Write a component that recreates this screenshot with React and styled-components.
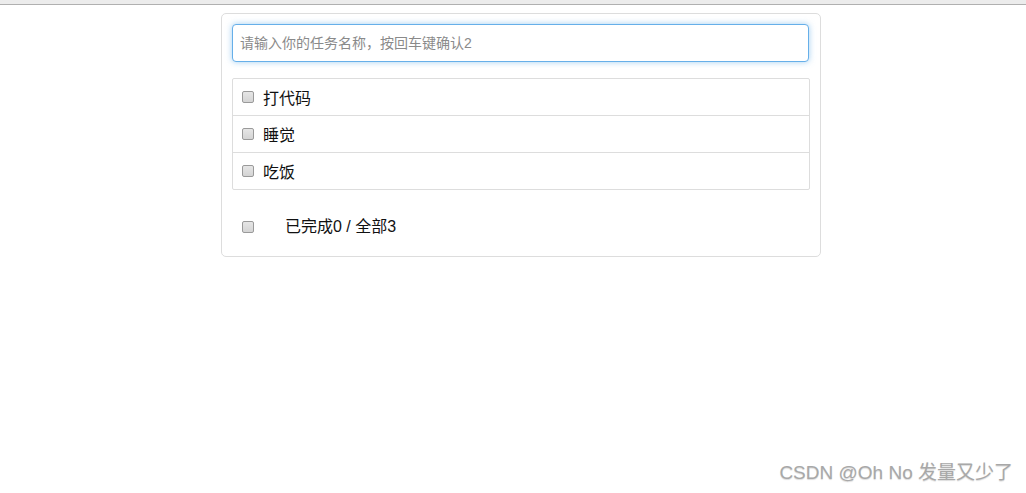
import React, { useState } from "react";
import styled, { createGlobalStyle } from "styled-components";

const GlobalStyle = createGlobalStyle`
  html, body {
    margin: 0;
    padding: 0;
    background: #fff;
    font-family: "Liberation Sans", "Noto Sans CJK SC", sans-serif;
  }
`;

const Page = styled.div`
  position: relative;
  width: 1026px;
  height: 493px;
  overflow: hidden;
`;

const TopBar = styled.div`
  height: 4px;
  background: #ececec;
  border-bottom: 1px solid #b0b0b0;
`;

const Wrap = styled.div`
  box-sizing: border-box;
  width: 600px;
  margin: 8px 0 0 221px;
  padding: 10px;
  border: 1px solid #ddd;
  border-radius: 5px;
`;

const Input = styled.input`
  display: block;
  box-sizing: border-box;
  width: 577px;
  height: 38px;
  padding: 0 7px;
  border: 1px solid #66afe9;
  border-radius: 4px;
  outline: none;
  box-shadow: 0 0 6px rgba(102, 175, 233, 0.6);
  font-family: "Liberation Sans", "Noto Sans CJK SC", sans-serif;
  font-size: 14px;
  color: #333;
  &::placeholder {
    color: #8a8a8a;
  }
`;

const List = styled.ul`
  list-style: none;
  margin: 16px 0 0;
  padding: 0;
  border: 1px solid #ddd;
  border-radius: 2px;
`;

const Item = styled.li`
  display: flex;
  align-items: center;
  height: 36px;
  padding-left: 9px;
  padding-bottom: 1px;
  box-sizing: border-box;
  font-size: 16px;
  color: #111;
  & + & {
    height: 37px;
    border-top: 1px solid #ddd;
  }
`;

const Check = styled.input.attrs({ type: "checkbox" })`
  appearance: none;
  box-sizing: border-box;
  width: 12px;
  height: 12px;
  margin: 0 ${(p) => p.$gap || 9}px 0 0;
  border: 1px solid #9a9a9a;
  border-radius: 2px;
  background: linear-gradient(#e6e6e6, #d4d4d4);
  &:checked {
    background: #4a90d9;
  }
`;

const Footer = styled.div`
  display: flex;
  align-items: center;
  height: 38px;
  margin-top: 18px;
  padding-left: 10px;
  font-size: 16px;
  color: #111;
`;

const FooterText = styled.span`
  position: relative;
  top: -2px;
`;

const Watermark = styled.div`
  position: absolute;
  right: 13px;
  bottom: 9px;
  font-family: "Liberation Sans", "Noto Sans CJK SC", sans-serif;
  font-size: 19px;
  color: #a8a8a8;
  text-shadow: 0 1px 1px rgba(0, 0, 0, 0.15);
`;

export default function App() {
  const [todos, setTodos] = useState([
    { id: 1, name: "打代码", done: false },
    { id: 2, name: "睡觉", done: false },
    { id: 3, name: "吃饭", done: false },
  ]);

  const toggle = (id) =>
    setTodos((list) =>
      list.map((t) => (t.id === id ? { ...t, done: !t.done } : t))
    );

  const doneCount = todos.filter((t) => t.done).length;
  const allDone = todos.length > 0 && doneCount === todos.length;

  return (
    <Page>
      <GlobalStyle />
      <TopBar />
      <Wrap>
        <Input placeholder="请输入你的任务名称，按回车键确认2" />
        <List>
          {todos.map((t) => (
            <Item key={t.id}>
              <Check checked={t.done} onChange={() => toggle(t.id)} />
              {t.name}
            </Item>
          ))}
        </List>
        <Footer>
          <Check
            $gap={31}
            checked={allDone}
            onChange={() =>
              setTodos((list) => list.map((t) => ({ ...t, done: !allDone })))
            }
          />
          <FooterText>
            已完成{doneCount} / 全部{todos.length}
          </FooterText>
        </Footer>
      </Wrap>
      <Watermark>CSDN @Oh No 发量又少了</Watermark>
    </Page>
  );
}
